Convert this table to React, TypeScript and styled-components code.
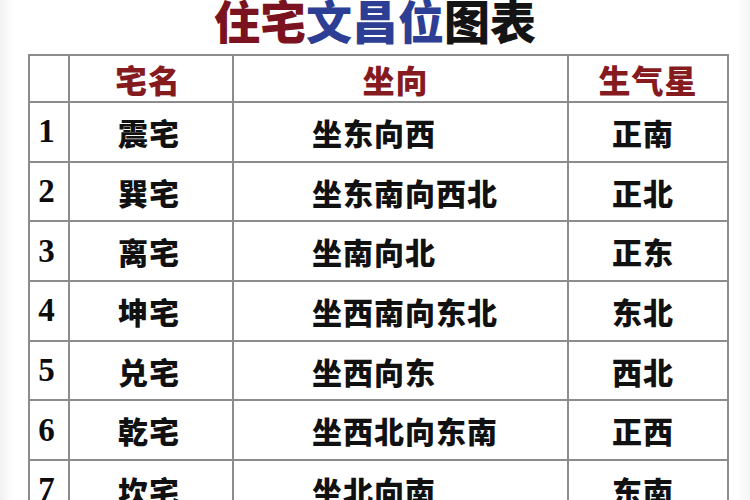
import { Fragment } from 'react';
import styled, { createGlobalStyle } from 'styled-components';

const GlobalStyle = createGlobalStyle`
  html, body {
    margin: 0;
    padding: 0;
    background: #ffffff;
  }
  body {
    width: 750px;
    height: 500px;
    overflow: hidden;
    font-family: "Noto Sans CJK SC", "Noto Sans", sans-serif;
  }
`;

const Page = styled.div`
  width: 750px;
  height: 500px;
  overflow: hidden;
  padding-left: 28px;
  box-sizing: border-box;
  background: linear-gradient(to right, #f2f2f2 0, #fbfbfb 10px, #fff 14px, #fff 736px, #f5f5f5 750px);
`;

const Title = styled.h1`
  margin: -9px 0 0;
  height: 63px;
  padding-right: 28px;
  text-align: center;
  font-size: 46px;
  line-height: 56px;
  font-weight: 900;
  letter-spacing: 0;
`;

const TitlePart = styled.span<{ tone: string }>`
  color: ${(props) => props.tone};
`;

const Grid = styled.div`
  display: grid;
  width: 701px;
  grid-template-columns: 40px 164px 335px 160px;
  grid-template-rows: 47px;
  grid-auto-rows: 59.7px;
  border-left: 2px solid #8c8c8c;
  border-top: 2px solid #8c8c8c;
  box-sizing: border-box;
`;

const Cell = styled.div<{ align?: 'left' | 'center'; head?: boolean; shift?: number }>`
  display: flex;
  align-items: center;
  justify-content: ${(props) => (props.align === 'left' ? 'flex-start' : 'center')};
  padding-left: ${(props) => (props.align === 'left' ? '78px' : '0')};
  padding-right: ${(props) => (props.shift ? `${props.shift}px` : '0')};
  border-right: 2px solid #8c8c8c;
  border-bottom: 2px solid #8c8c8c;
  box-sizing: border-box;
  color: ${(props) => (props.head ? '#851a1f' : '#111')};
  font-size: ${(props) => (props.head ? '32px' : '30px')};
  font-weight: 900;
  letter-spacing: 1px;
  white-space: nowrap;
`;

const NumCell = styled(Cell)`
  font-family: "Liberation Serif", "DejaVu Serif", serif;
  font-weight: 700;
  font-size: 33px;
  padding-right: 4px;
  color: #0c0c0c;
`;

const rows = [
  ['震宅', '坐东向西', '正南'],
  ['巽宅', '坐东南向西北', '正北'],
  ['离宅', '坐南向北', '正东'],
  ['坤宅', '坐西南向东北', '东北'],
  ['兑宅', '坐西向东', '西北'],
  ['乾宅', '坐西北向东南', '正西'],
  ['坎宅', '坐北向南', '东南'],
];

export default function App() {
  return (
    <>
      <GlobalStyle />
      <Page>
        <Title>
          <TitlePart tone="#7b1220">住宅</TitlePart>
          <TitlePart tone="#2c3f94">文昌位</TitlePart>
          <TitlePart tone="#141414">图表</TitlePart>
        </Title>
        <Grid>
          <Cell head />
          <Cell head shift={6}>宅名</Cell>
          <Cell head shift={10}>坐向</Cell>
          <Cell head>生气星</Cell>
          {rows.map((row, i) => (
            <Fragment key={i}>
              <NumCell>{i + 1}</NumCell>
              <Cell shift={4}>{row[0]}</Cell>
              <Cell align="left">{row[1]}</Cell>
              <Cell shift={10}>{row[2]}</Cell>
            </Fragment>
          ))}
        </Grid>
      </Page>
    </>
  );
}
